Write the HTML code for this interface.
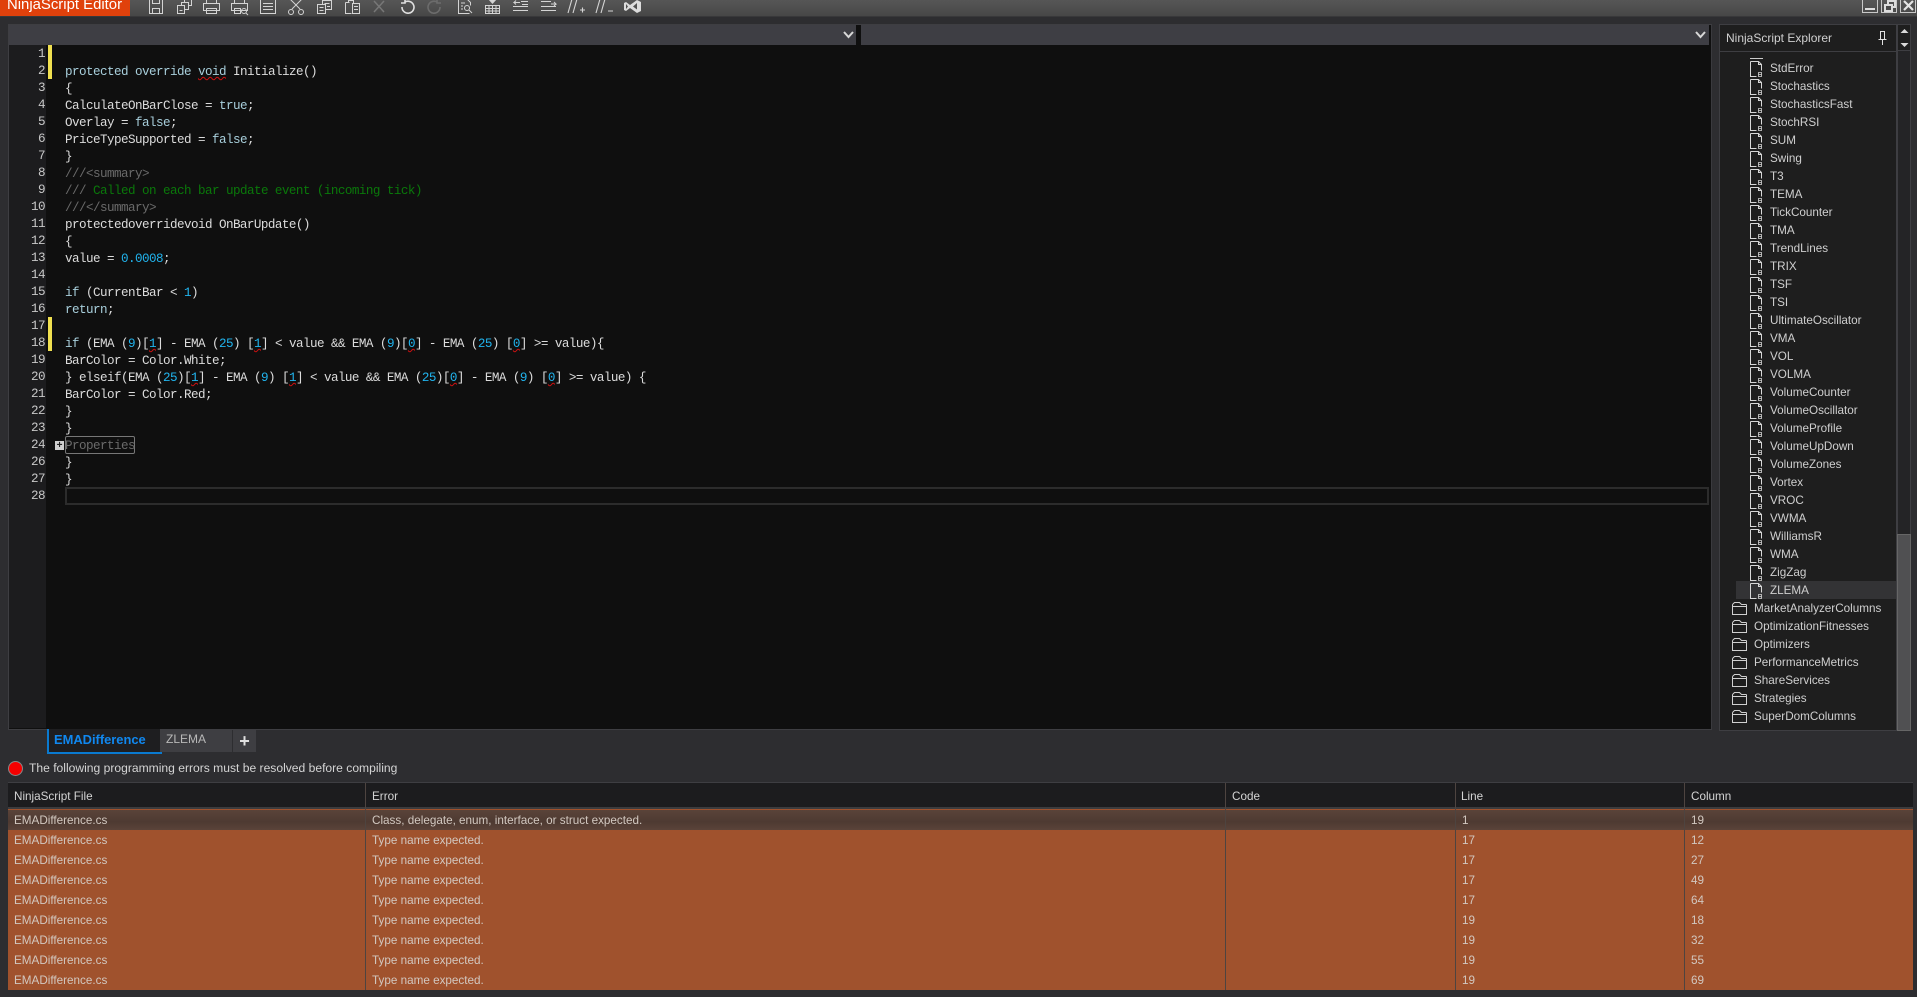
<!DOCTYPE html>
<html>
<head>
<meta charset="utf-8">
<style>
html,body{margin:0;padding:0;width:1917px;height:997px;overflow:hidden;background:#2d2d30}
body{position:relative;font-family:"Liberation Sans",sans-serif;color:#d8d8d8}
.a{position:absolute}
#title{left:0;top:0;width:1917px;height:16px;background:linear-gradient(#565656,#474747)}
#title2{left:0;top:16px;width:1917px;height:1px;background:#38383a}
#orange{left:0;top:-3px;width:130px;height:19px;background:#e0410c;color:#fff;font-size:14.9px;line-height:17px;text-indent:7px;white-space:nowrap;overflow:hidden}
.wb{top:-1px;width:14px;height:12px;border:1px solid #c8c8c8;color:#ddd}
#ed{left:8px;top:24px;width:1702px;height:704px;border:1px solid #3e3e42;background:#0f0f0f;border-right:1px solid #3a3a3e}
.combo{top:25px;height:20px;background:#3e3e44}
#gut{left:9px;top:45px;width:37px;height:683px;background:#1c1c1e}
.yb{left:48px;width:4px;background:#f0e050}
#ln{left:9px;top:46px;width:36px;text-align:right;font:12.6px/17px "Liberation Mono",monospace;letter-spacing:-.56px;color:#c8c8c8;white-space:pre}
#code{left:65px;top:47px;font:12.6px/17px "Liberation Mono",monospace;letter-spacing:-.56px;color:#dcdcdc;white-space:pre}
.k{color:#a8cfdc}.n{color:#21b4ee}.c{color:#6a6a6a}.g{color:#0a780a}
.s{text-decoration:underline wavy #d01010;text-decoration-thickness:1px;text-underline-offset:1px}
#prop{left:65px;top:436px;width:68px;height:16px;border:1px solid #777;border-radius:2px}
#plus{left:55px;top:441px;width:9px;height:9px;background:#cfcfcf;color:#222;font:bold 10px/9px "Liberation Sans";text-align:center}
#cur{left:65px;top:487px;width:1640px;height:14px;border:2px solid #2c2c2c}
#tab1{left:47px;top:729px;width:111px;height:23px;border:2px solid #0a7ad0;border-top:0;background:#1e1e20;color:#1088f0;font-weight:bold;font-size:12.9px;line-height:21px;text-indent:5px}
#tab2{left:160px;top:729px;width:72px;height:23px;background:#3e3e42;color:#b8b8b8;font-size:12px;line-height:21px;text-indent:6px}
#tab3{left:233px;top:730px;width:23px;height:22px;background:#3e3e42;color:#e0e0e0;font:bold 18px/23px "Liberation Sans";text-align:center}
#dot{left:7.500px;top:760.500px;width:13px;height:13px;border-radius:50%;background:#f50000;border:1px solid #888}
#msg{left:29px;top:760px;font-size:12.1px;line-height:16px;color:#d4d4d4;white-space:nowrap}
#panel{left:1719px;top:24px;width:178px;height:707px;background:#1e1e1e;border:1px solid #3e3e42;box-sizing:border-box}
#phead{left:1720px;top:25px;width:176px;height:26px;border-bottom:1px solid #3e3e42;font-size:12px;line-height:26px;text-indent:6px;color:#d0d0d0}
#sb{left:1897px;top:24px;width:14px;height:707px;background:#242426;border:1px solid #3e3e42;box-sizing:border-box}
#sbh{left:1897px;top:24px;width:14px;height:27px;background:#1e1e1e;border:1px solid #3e3e42;box-sizing:border-box}
#th{left:1897px;top:534px;width:14px;height:197px;background:#505052;border:1px solid #666;box-sizing:border-box}
.i{position:absolute;left:1770px;font-size:11.7px;line-height:18px;color:#cfcfcf;white-space:nowrap;margin-top:1px}
.f{left:1754px}
#sel{left:1736px;top:581px;width:160px;height:18px;background:#333335}
#tb{left:8px;top:782px;width:1905px;height:208px;background:#a0522d}
#thd{left:8px;top:782px;width:1905px;height:27px;background:#1c1c1e;border-top:1px solid #3e3e42;border-bottom:2px solid #3c3c3e;box-sizing:border-box}
#r1{left:8px;top:810px;width:1905px;height:20px;background:linear-gradient(#5a4339,#4e3a32 60%,#5a4339)}
.v{top:783px;width:1px;height:207px;background:#4e4440}
.h{top:783px;font-size:11.7px;line-height:27px;color:#d4d4d4;white-space:nowrap}
.d{font-size:11.7px;line-height:20px;color:#d2c8c0;white-space:nowrap;margin-top:1px}
</style>
</head>
<body>
<div class="a" id="title"></div><div class="a" id="title2"></div>
<div class="a" id="orange">NinjaScript Editor</div>

<svg class="a" style="left:130px;top:-2px" width="520" height="18" fill="none" stroke="#d4d4d4" stroke-width="1">
<g>
<path d="M19.5 1.5h13v14h-13zM22.5 1.5v4h7v-4M22.5 15.5v-5h7v5"/>
<path d="M47.5 7.5h7v8h-7zM49.5 12.5h3M51.5 7.5v-3h7v7h-4M54.5 4.5v-3h7v6h-3"/>
<path d="M76.5 1.5h10v4h-10zM73.5 5.5h16v7h-16zM76.5 10.5h10v5h-10z"/>
<path d="M104.5 1.5h10v4h-10zM101.5 5.5h16v7h-16zM104.5 10.5h6v5h-6z"/><circle cx="114" cy="13" r="2.5"/><path d="M116 15l2 2"/>
<path d="M130.5 1.5h15v14h-15zM133 5.5h10M133 8.5h10M133 11.5h10"/>
<path d="M160 1l10 10M172 1l-10 10"/><circle cx="161" cy="14" r="2.5"/><circle cx="171" cy="14" r="2.5"/>
<path d="M187.5 6.5h8v9h-8zM189.5 9.5h4M189.5 12.5h4M192.5 6.5v-4h9v9h-6M194.5 5.5h5M197 8.5h3"/>
<path d="M215.5 4.5h4M215.5 4.5v11h6M222.5 5.5h7v10h-7zM224 8.5h4M224 11.5h4M218.5 4.5v-2h5v3"/>
</g>
<path d="M244 3l10 11M254 3l-10 11" stroke="#777" stroke-width="1.5"/>
<path d="M275 4a6 6 0 1 1-3 5M275 1v4h-4" stroke="#e0e0e0" stroke-width="1.6"/>
<path d="M307 4a6 6 0 1 0 3 5M307 1v4h4" stroke="#6c6c6c" stroke-width="1.6"/>
<g>
<path d="M328.5 1.5h9l3 3v3M328.5 1.5v14h11M331 5h4M331 8h2M331 11h2"/><circle cx="337" cy="10" r="2.5"/><path d="M339 12l3 3"/>
<path d="M355.5 7.5h14v8h-14zM355.5 10.5h14M355.5 13h14M359 7.5v8M362.5 7.5v8M366 7.5v8"/><path d="M358 1h9l-4.500 5z" fill="#d4d4d4" stroke="none"/>
<path d="M390 4.500h-6l2-2M384 4.500l2 2M391 3.500h7M383 8.500h15M383 12.500h15M392 6.500h6"/>
<path d="M411 3.500h10M411 8.500h15M411 12.500h15M421 6h5l-2-2M426 6l-2 2"/>
<path d="M438 15l4-14M443 15l4-14M450 12h5M452.500 9.500v5" stroke-width="1.100"/>
<path d="M466 15l4-14M471 15l4-14M478 13h5" stroke-width="1.100"/>
</g>
<path d="M496 4l4 3 7-5 4 2v9l-4 2-7-5-4 3-2-1v-7zM496 6v5l2-2.500zM507 5l-4 3.500 4 3z" fill="#dcdcdc" stroke="none" fill-rule="evenodd"/>
</svg>

<div class="a wb" style="left:1862px"><div class="a" style="left:2px;top:8px;width:10px;height:2px;background:#ddd"></div></div>
<div class="a wb" style="left:1881px"><div class="a" style="left:5px;top:0;width:5px;height:4px;border:2px solid #ddd"></div><div class="a" style="left:2px;top:4px;width:5px;height:4px;border:2px solid #ddd;background:#4a4a4a"></div></div>
<div class="a wb" style="left:1900px;width:14px"><svg class="a" style="left:2px;top:0" width="11" height="11" stroke="#e4e4e4" stroke-width="2.200"><path d="M1 1l9 9M10 1l-9 9"/></svg></div>

<div class="a" id="ed"></div>
<div class="a combo" style="left:9px;width:847px"></div>
<div class="a combo" style="left:861px;width:848px"></div>
<svg class="a" style="left:843px;top:31px" width="11" height="8" fill="none" stroke="#d8d8d8" stroke-width="2"><path d="M1 1l4.500 5 4.500-5"/></svg>
<svg class="a" style="left:1695px;top:31px" width="11" height="8" fill="none" stroke="#d8d8d8" stroke-width="2"><path d="M1 1l4.500 5 4.500-5"/></svg>
<div class="a" id="gut"></div>
<div class="a yb" style="top:45px;height:34px"></div>
<div class="a yb" style="top:317px;height:34px"></div>
<div class="a" id="cur"></div>
<div class="a" id="prop"></div>
<div class="a" id="plus">+</div>

<div class="a" id="ln">1
2
3
4
5
6
7
8
9
10
11
12
13
14
15
16
17
18
19
20
21
22
23
24
26
27
28</div>

<div class="a" id="code">
<span class="k">protected override</span> <span class="k s">void</span> Initialize()
{
CalculateOnBarClose = <span class="k">true</span>;
Overlay = <span class="k">false</span>;
PriceTypeSupported = <span class="k">false</span>;
}
<span class="c">///&lt;summary&gt;</span>
<span class="c">///</span> <span class="g">Called on each bar update event (incoming tick)</span>
<span class="c">///&lt;/summary&gt;</span>
protectedoverridevoid OnBarUpdate()
{
value = <span class="n">0.0008</span>;

<span class="k">if</span> (CurrentBar &lt; <span class="n">1</span>)
<span class="k">return</span>;

<span class="k">if</span> (EMA (<span class="n">9</span>)[<span class="n s">1</span>] - EMA (<span class="n">25</span>) [<span class="n s">1</span>] &lt; value &amp;&amp; EMA (<span class="n">9</span>)[<span class="n s">0</span>] - EMA (<span class="n">25</span>) [<span class="n s">0</span>] &gt;= value){
BarColor = Color.White;
} elseif(EMA (<span class="n">25</span>)[<span class="n s">1</span>] - EMA (<span class="n">9</span>) [<span class="n s">1</span>] &lt; value &amp;&amp; EMA (<span class="n">25</span>)[<span class="n s">0</span>] - EMA (<span class="n">9</span>) [<span class="n s">0</span>] &gt;= value) {
BarColor = Color.Red;
}
}
<span class="c">Properties</span>
}
}</div>

<div class="a" id="tab1">EMADifference</div>
<div class="a" id="tab2">ZLEMA</div>
<div class="a" id="tab3">+</div>
<div class="a" id="dot"></div>
<div class="a" id="msg">The following programming errors must be resolved before compiling</div>

<div class="a" id="panel"></div>
<div class="a" id="sb"></div>
<div class="a" id="th"></div>
<div class="a" id="sbh"></div>
<svg class="a" style="left:1900px;top:28px" width="9" height="20" fill="#d8d8d8"><path d="M4.500 1l4 4h-8zM.5 15h8l-4 4z"/></svg>
<div class="a" id="phead">NinjaScript Explorer</div>
<svg class="a" style="left:1878px;top:30px" width="9" height="16" fill="none" stroke="#e0e0e0"><path d="M2.500 1.500h4v8h-4zM0.500 9.500h8M4.500 10v5"/></svg>
<div class="a" style="left:1750px;top:58px;width:13px;height:1px;background:#ccc"></div>
<div class="a" id="sel"></div>

<svg class="a" style="left:1750px;top:61px" width="14" height="550" fill="none" stroke="#d8d8d8">
<defs><g id="fi"><path d="M0.500 0.500h8l3 3v6M6.500 15.500h-6v-15M8.500 .5v3h3"/><path d="M8.500 11.500h3v4h-3zM8.500 13.500h3" stroke-width=".8"/></g></defs>
<use href="#fi" y="0"/><use href="#fi" y="18"/><use href="#fi" y="36"/><use href="#fi" y="54"/><use href="#fi" y="72"/><use href="#fi" y="90"/>
<use href="#fi" y="108"/><use href="#fi" y="126"/><use href="#fi" y="144"/><use href="#fi" y="162"/><use href="#fi" y="180"/><use href="#fi" y="198"/>
<use href="#fi" y="216"/><use href="#fi" y="234"/><use href="#fi" y="252"/><use href="#fi" y="270"/><use href="#fi" y="288"/><use href="#fi" y="306"/>
<use href="#fi" y="324"/><use href="#fi" y="342"/><use href="#fi" y="360"/><use href="#fi" y="378"/><use href="#fi" y="396"/><use href="#fi" y="414"/>
<use href="#fi" y="432"/><use href="#fi" y="450"/><use href="#fi" y="468"/><use href="#fi" y="486"/><use href="#fi" y="504"/><use href="#fi" y="522"/>
</svg>
<svg class="a" style="left:1732px;top:601px" width="16" height="130" fill="none" stroke="#d0d0d0">
<defs><g id="fo"><path d="M.5 3.500v10h14v-10M.5 5.500h14M.5 3.500l2-2h5l2 2h5"/></g></defs>
<use href="#fo" y="0"/><use href="#fo" y="18"/><use href="#fo" y="36"/><use href="#fo" y="54"/><use href="#fo" y="72"/><use href="#fo" y="90"/><use href="#fo" y="108"/>
</svg>

<div class="i" style="top:59px">StdError</div>
<div class="i" style="top:77px">Stochastics</div>
<div class="i" style="top:95px">StochasticsFast</div>
<div class="i" style="top:113px">StochRSI</div>
<div class="i" style="top:131px">SUM</div>
<div class="i" style="top:149px">Swing</div>
<div class="i" style="top:167px">T3</div>
<div class="i" style="top:185px">TEMA</div>
<div class="i" style="top:203px">TickCounter</div>
<div class="i" style="top:221px">TMA</div>
<div class="i" style="top:239px">TrendLines</div>
<div class="i" style="top:257px">TRIX</div>
<div class="i" style="top:275px">TSF</div>
<div class="i" style="top:293px">TSI</div>
<div class="i" style="top:311px">UltimateOscillator</div>
<div class="i" style="top:329px">VMA</div>
<div class="i" style="top:347px">VOL</div>
<div class="i" style="top:365px">VOLMA</div>
<div class="i" style="top:383px">VolumeCounter</div>
<div class="i" style="top:401px">VolumeOscillator</div>
<div class="i" style="top:419px">VolumeProfile</div>
<div class="i" style="top:437px">VolumeUpDown</div>
<div class="i" style="top:455px">VolumeZones</div>
<div class="i" style="top:473px">Vortex</div>
<div class="i" style="top:491px">VROC</div>
<div class="i" style="top:509px">VWMA</div>
<div class="i" style="top:527px">WilliamsR</div>
<div class="i" style="top:545px">WMA</div>
<div class="i" style="top:563px">ZigZag</div>
<div class="i" style="top:581px">ZLEMA</div>
<div class="i f" style="top:599px">MarketAnalyzerColumns</div>
<div class="i f" style="top:617px">OptimizationFitnesses</div>
<div class="i f" style="top:635px">Optimizers</div>
<div class="i f" style="top:653px">PerformanceMetrics</div>
<div class="i f" style="top:671px">ShareServices</div>
<div class="i f" style="top:689px">Strategies</div>
<div class="i f" style="top:707px">SuperDomColumns</div>

<div class="a" id="tb"></div>
<div class="a" id="thd"></div>
<div class="a" id="r1"></div>
<div class="a v" style="left:365px"></div>
<div class="a v" style="left:1225px"></div>
<div class="a v" style="left:1455px"></div>
<div class="a v" style="left:1684px"></div>
<div class="a h" style="left:14px">NinjaScript File</div>
<div class="a h" style="left:372px">Error</div>
<div class="a h" style="left:1232px">Code</div>
<div class="a h" style="left:1461px">Line</div>
<div class="a h" style="left:1691px">Column</div>

<div class="a d" style="left:14px;top:810px">EMADifference.cs</div>
<div class="a d" style="left:14px;top:830px">EMADifference.cs</div>
<div class="a d" style="left:14px;top:850px">EMADifference.cs</div>
<div class="a d" style="left:14px;top:870px">EMADifference.cs</div>
<div class="a d" style="left:14px;top:890px">EMADifference.cs</div>
<div class="a d" style="left:14px;top:910px">EMADifference.cs</div>
<div class="a d" style="left:14px;top:930px">EMADifference.cs</div>
<div class="a d" style="left:14px;top:950px">EMADifference.cs</div>
<div class="a d" style="left:14px;top:970px">EMADifference.cs</div>

<div class="a d" style="left:372px;top:810px">Class, delegate, enum, interface, or struct expected.</div>
<div class="a d" style="left:372px;top:830px">Type name expected.</div>
<div class="a d" style="left:372px;top:850px">Type name expected.</div>
<div class="a d" style="left:372px;top:870px">Type name expected.</div>
<div class="a d" style="left:372px;top:890px">Type name expected.</div>
<div class="a d" style="left:372px;top:910px">Type name expected.</div>
<div class="a d" style="left:372px;top:930px">Type name expected.</div>
<div class="a d" style="left:372px;top:950px">Type name expected.</div>
<div class="a d" style="left:372px;top:970px">Type name expected.</div>

<div class="a d" style="left:1462px;top:810px">1</div>
<div class="a d" style="left:1462px;top:830px">17</div>
<div class="a d" style="left:1462px;top:850px">17</div>
<div class="a d" style="left:1462px;top:870px">17</div>
<div class="a d" style="left:1462px;top:890px">17</div>
<div class="a d" style="left:1462px;top:910px">19</div>
<div class="a d" style="left:1462px;top:930px">19</div>
<div class="a d" style="left:1462px;top:950px">19</div>
<div class="a d" style="left:1462px;top:970px">19</div>

<div class="a d" style="left:1691px;top:810px">19</div>
<div class="a d" style="left:1691px;top:830px">12</div>
<div class="a d" style="left:1691px;top:850px">27</div>
<div class="a d" style="left:1691px;top:870px">49</div>
<div class="a d" style="left:1691px;top:890px">64</div>
<div class="a d" style="left:1691px;top:910px">18</div>
<div class="a d" style="left:1691px;top:930px">32</div>
<div class="a d" style="left:1691px;top:950px">55</div>
<div class="a d" style="left:1691px;top:970px">69</div>
</body>
</html>
